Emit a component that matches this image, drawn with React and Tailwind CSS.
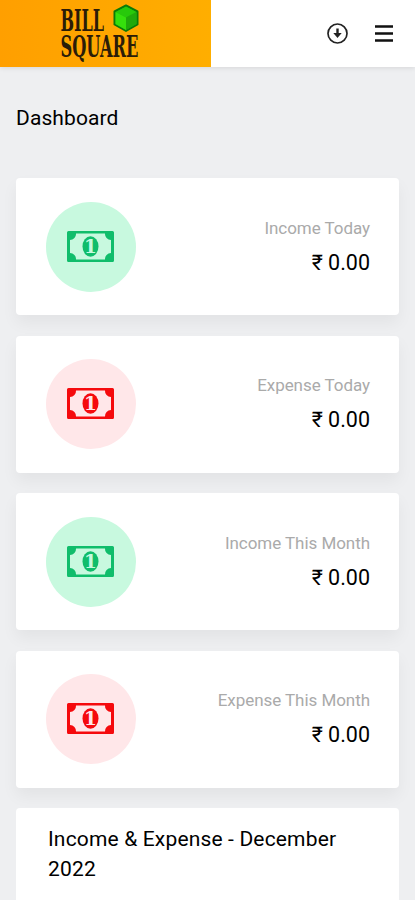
import React from "react";

const stats = [
  { label: "Income Today", value: "0.00", type: "income" },
  { label: "Expense Today", value: "0.00", type: "expense" },
  { label: "Income This Month", value: "0.00", type: "income" },
  { label: "Expense This Month", value: "0.00", type: "expense" },
];

const Logo = () => (
  <svg
    width="80"
    height="56"
    viewBox="0 0 80 56"
    fontFamily="'DejaVu Serif', serif"
    fontWeight="700"
    fontSize="30"
    fill="#2b1c08"
    className="overflow-visible"
  >
    <text x="0.500" y="25.500" textLength="43.500" lengthAdjust="spacingAndGlyphs">BILL</text>
    <text x="0.500" y="52" textLength="78" lengthAdjust="spacingAndGlyphs">SQUARE</text>
    <path d="M66 0.500 77.500 6.500v13L66 26 54.500 19.500v-13Z" fill="#22b80c" stroke="#0b7a08" strokeWidth="2" strokeLinejoin="round" />
    <path d="M66 1.500 76.500 7 66 12.500 55.500 7Z" fill="#27c90b" />
    <path d="M55.500 7 66 12.500V25l-10.500-6Z" fill="#35e00c" />
    <path d="M76.500 7 66 12.500V25l10.500-6Z" fill="#20a90b" />
  </svg>
);

const MoneyIcon = ({ holeClass }) => (
  <svg width="47" height="32" viewBox="0 0 47 32" fill="currentColor" className="mr-0.5">
    <path
      fillRule="evenodd"
      d="M1.500 0h44A1.500 1.500 0 0 1 47 1.500v28a1.500 1.500 0 0 1-1.500 1.500h-44A1.500 1.500 0 0 1 0 29.500v-28A1.500 1.500 0 0 1 1.500 0ZM9 2.500A6 6 0 0 1 3 9v13A6 6 0 0 1 9 28.500h29A6 6 0 0 1 44 22v-13A6 6 0 0 1 38 2.500Z"
    />
    <ellipse cx="23.500" cy="15.500" rx="8" ry="10.200" />
    <text x="23.500" y="22.300" textAnchor="middle" fontFamily="'DejaVu Serif', serif" fontWeight="700" fontSize="18.500" className={holeClass}>1</text>
  </svg>
);

const StatCard = ({ label, value, type }) => (
  <div className="flex h-[137px] items-center justify-between rounded bg-white pl-[30px] pr-[29px] shadow-[0_8px_16px_rgba(0,0,0,0.05)]">
    <div
      className={
        type === "income"
          ? "flex h-[90px] w-[90px] items-center justify-center rounded-full bg-[#c8f9df] text-[#10bd6b]"
          : "flex h-[90px] w-[90px] items-center justify-center rounded-full bg-[#ffe7e9] text-[#f50a0d]"
      }
    >
      <MoneyIcon holeClass={type === "income" ? "fill-[#c8f9df]" : "fill-[#ffe7e9]"} />
    </div>
    <div className="pb-[2px] text-right">
      <p className="text-[17px] leading-[26px] tracking-[-0.05px] text-[#aaaaaa]">{label}</p>
      <p className="mt-2 text-[21.5px] leading-7 text-black">₹ {value}</p>
    </div>
  </div>
);

export default function App() {
  return (
    <div className="h-[900px] overflow-hidden bg-[#eeeff1] font-['Roboto','Noto_Sans',sans-serif] text-black">
      <header className="flex h-[67px] bg-white shadow-[0_1px_5px_rgba(0,0,0,0.1)]">
        <div className="flex w-[211px] justify-center bg-linear-to-r from-[#ff9f00] to-[#ffae00] pr-[12px] pt-[5px]">
          <Logo />
        </div>
        <div className="flex flex-1 items-center justify-end gap-[27px] pr-[22px]">
          <svg width="21" height="21" viewBox="0 0 21 21" fill="none" stroke="#222" strokeWidth="1.700">
            <circle cx="10.500" cy="10.500" r="9.500" />
            <path d="M10.500 5.500v6" strokeWidth="2.400" />
            <path d="M6.300 10h8.400l-4.200 5Z" fill="#222" stroke="none" />
          </svg>
          <svg width="18" height="17" viewBox="0 0 18 17" fill="none" stroke="#111" strokeWidth="2.400">
            <path d="M0 1.500h18M0 8.500h18M0 15.500h18" />
          </svg>
        </div>
      </header>

      <main className="px-4">
        <h1 className="pt-[37px] text-[21px] leading-7 tracking-[0.1px]">Dashboard</h1>
        <div className="mt-[46px] flex flex-col gap-[20.6px]">
          {stats.map((s) => (
            <StatCard key={s.label} {...s} />
          ))}
          <section className="h-[120px] rounded bg-white px-8 pt-[17px]">
            <h2 className="text-[21px] leading-[29.5px] tracking-[0.160px]">Income &amp; Expense - December 2022</h2>
          </section>
        </div>
      </main>
    </div>
  );
}
